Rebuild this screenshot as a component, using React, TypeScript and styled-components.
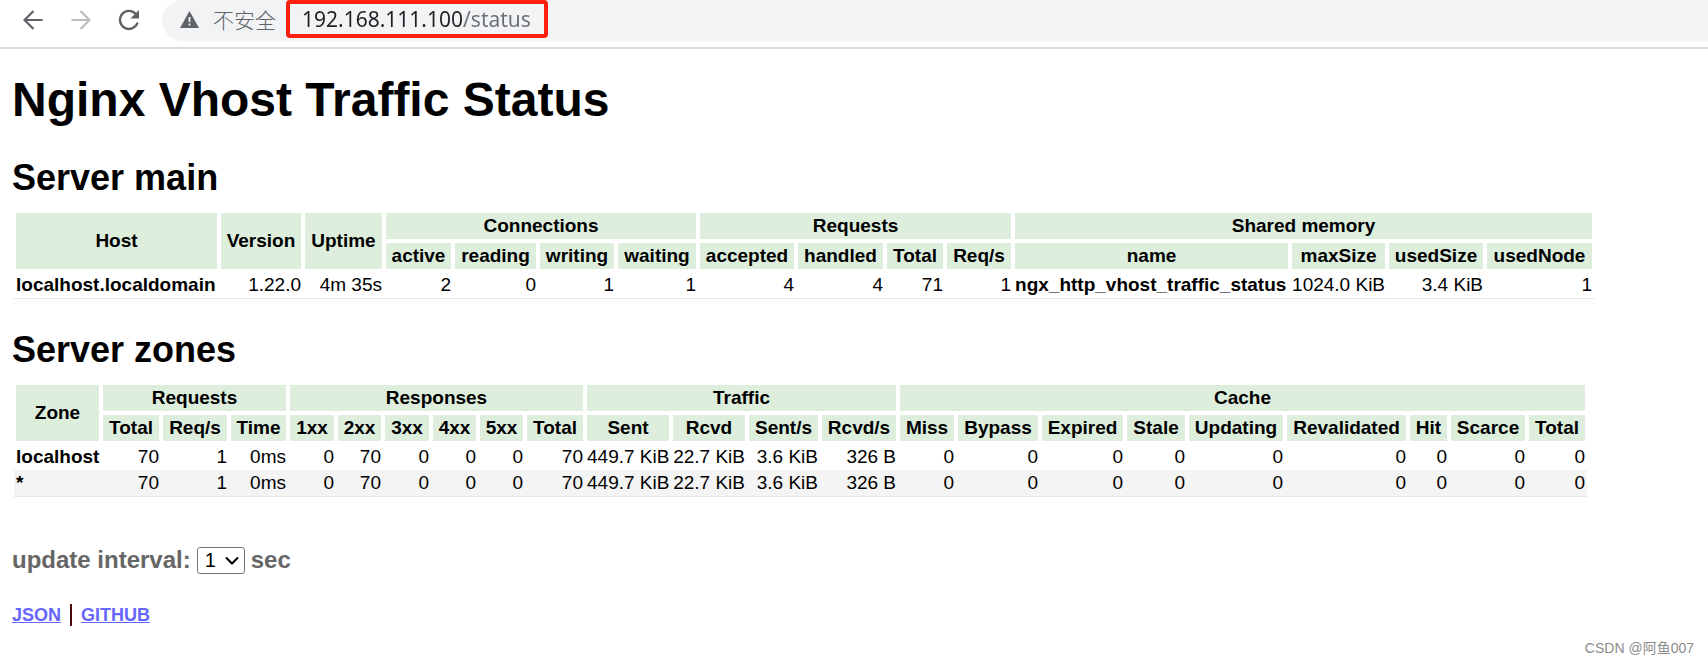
import React, { useState } from "react";
import styled, { createGlobalStyle } from "styled-components";

const GlobalStyle = createGlobalStyle`
  * { box-sizing: border-box; }
  body {
    margin: 0;
    background: #fff;
    color: #000;
    font-family: "Liberation Sans", "Noto Sans CJK SC", sans-serif;
  }
`;

const Page = styled.div`
  min-height: 100vh;
  display: flex;
  flex-direction: column;
`;

const Toolbar = styled.header`
  display: flex;
  align-items: flex-start;
  height: 49px;
  padding-left: 18px;
  border-bottom: 2px solid #dcdcdc;
`;

const NavButton = styled.button`
  width: 30px;
  height: 40px;
  margin-right: 18px;
  padding: 0;
  border: 0;
  background: none;
  display: flex;
  align-items: center;
  justify-content: center;
  color: ${(p) => (p.disabled ? "#babcbe" : "#5f6368")};
`;

const AddressBar = styled.div`
  flex: 1;
  display: flex;
  align-items: center;
  height: 41px;
  padding: 0 0 3px 18px;
  border-radius: 21px 0 0 21px;
  background: #f1f3f4;
  color: #5f6368;
`;

const SecurityLabel = styled.label`
  margin: 0 10px 0 14px;
  font: 300 21px/30px "Noto Sans CJK SC", sans-serif;
`;

const AddressInput = styled.input`
  width: 262px;
  height: 38px;
  padding: 0 0 0 12px;
  border: 4px solid #ff1f10;
  border-radius: 4px;
  outline: 0;
  font: 400 21px/30px "Noto Sans", sans-serif;
  color: transparent;
  background: linear-gradient(90deg, #202124 178px, #6b6f73 178px) border-box text;
`;

const Main = styled.main`
  padding: 0 12px;
`;

const Title = styled.h1`
  margin: 24px 0 0;
  font-size: 48px;
  line-height: 54px;
`;

const SectionTitle = styled.h2`
  margin: 30px 0 0;
  font-size: 36px;
  line-height: 42px;
`;

const StatusTable = styled.table`
  margin: 12px 0 0 2px;
  border-spacing: 0;
  border-bottom: 1px solid #ddeedd;
  font-size: 19px;
  line-height: 26px;
  white-space: nowrap;
  table-layout: fixed;
  width: min-content;

  thead th {
    height: 30px;
    padding: 0;
    border: 2px solid #fff;
    background: #ddeedd;
    background-clip: padding-box;
    text-align: center;
  }
`;

const DataRow = styled.tr`
  &:nth-child(even) { background: #f4f4f4; }
  &:first-child > * { padding-top: 1px; }
`;

const DataCell = styled.td`
  padding: 0 2px;
  text-align: right;
`;

const NameCell = styled.th`
  padding: 0 2px;
  text-align: left;
`;

const IntervalForm = styled.form`
  display: flex;
  align-items: center;
  gap: 6px;
  margin-top: 46px;
  font-size: 24px;
  line-height: 34px;
  font-weight: bold;
  color: #666;
`;

const SelectBox = styled.span`
  display: grid;
  align-items: center;
  height: 27px;

  > * { grid-area: 1 / 1; }
  > svg { justify-self: end; margin-right: 6px; pointer-events: none; }
`;

const Select = styled.select`
  appearance: none;
  width: 48px;
  height: 27px;
  padding: 0 0 0 7px;
  border: 1px solid #767676;
  border-radius: 3px;
  background: #fff;
  color: #000;
  font: 20px/24px "Liberation Sans", sans-serif;
`;

const Links = styled.nav`
  display: flex;
  align-items: center;
  margin-top: 27px;
  font-size: 18px;
  line-height: 22px;
  font-weight: bold;

  a { color: #6666ff; }
  a + a { margin-left: 9px; padding-left: 9px; border-left: 2px solid #4a0808; }
`;

const Credit = styled.footer`
  margin: auto 14px 6px 0;
  text-align: right;
  font-size: 14px;
  line-height: 20px;
  color: #8c8c8c;
`;

type Cell = string | { name: string };
type Group = { label: string; columns?: string[] };

const mainGroups: Group[] = [
  { label: "Host" },
  { label: "Version" },
  { label: "Uptime" },
  { label: "Connections", columns: ["active", "reading", "writing", "waiting"] },
  { label: "Requests", columns: ["accepted", "handled", "Total", "Req/s"] },
  { label: "Shared memory", columns: ["name", "maxSize", "usedSize", "usedNode"] },
];
const mainWidths = [205, 84, 81, 69, 85, 78, 82, 98, 89, 60, 68, 277, 97, 98, 109];
const mainRows: Cell[][] = [
  [
    { name: "localhost.localdomain" }, "1.22.0", "4m 35s", "2", "0", "1", "1", "4", "4", "71", "1",
    { name: "ngx_http_vhost_traffic_status" }, "1024.0 KiB", "3.4 KiB", "1",
  ],
];

const zoneGroups: Group[] = [
  { label: "Zone" },
  { label: "Requests", columns: ["Total", "Req/s", "Time"] },
  { label: "Responses", columns: ["1xx", "2xx", "3xx", "4xx", "5xx", "Total"] },
  { label: "Traffic", columns: ["Sent", "Rcvd", "Sent/s", "Rcvd/s"] },
  {
    label: "Cache",
    columns: ["Miss", "Bypass", "Expired", "Stale", "Updating", "Revalidated", "Hit", "Scarce", "Total"],
  },
];
const zoneWidths = [
  87, 60, 68, 59, 48, 47, 48, 47, 47, 60, 86, 76, 73, 78, 58, 84, 85, 62, 98, 123, 41, 78, 60,
];
const zoneRows: Cell[][] = ["localhost", "*"].map((name) => [
  { name }, "70", "1", "0ms", "0", "70", "0", "0", "0", "70",
  "449.7 KiB", "22.7 KiB", "3.6 KiB", "326 B",
  "0", "0", "0", "0", "0", "0", "0", "0", "0",
]);

const Col = styled.col<{ $width: number }>`
  width: ${(p) => p.$width}px;
`;

function TrafficTable(props: { label: string; groups: Group[]; widths: number[]; rows: Cell[][] }) {
  const { label, groups, widths, rows } = props;
  return (
    <StatusTable aria-label={label}>
      <colgroup>
        {widths.map((w, i) => <Col key={i} $width={w} />)}
      </colgroup>
      <thead>
        <tr>
          {groups.map((g) => (
            <th key={g.label} rowSpan={g.columns ? 1 : 2} colSpan={g.columns ? g.columns.length : 1}>
              {g.label}
            </th>
          ))}
        </tr>
        <tr>
          {groups.flatMap((g) => (g.columns ?? []).map((c) => <th key={g.label + c}>{c}</th>))}
        </tr>
      </thead>
      <tbody>
        {rows.map((row, r) => (
          <DataRow key={r}>
            {row.map((cell, i) =>
              typeof cell === "string"
                ? <DataCell key={i}>{cell}</DataCell>
                : <NameCell key={i}>{cell.name}</NameCell>
            )}
          </DataRow>
        ))}
      </tbody>
    </StatusTable>
  );
}

const Arrow = ({ forward = false }: { forward?: boolean }) => (
  <svg width="20" height="20" viewBox="0 0 20 20" fill="none" stroke="currentColor" strokeWidth="2.2">
    {forward
      ? <path d="M0.5 10H18M9.5 1L18.5 10L9.5 19" />
      : <path d="M19.5 10H2M10.5 1L1.5 10L10.5 19" />}
  </svg>
);

const Reload = () => (
  <svg width="22" height="22" viewBox="0 0 22 22">
    <path d="M17.8 5A9 9 0 1 0 19.6 13.5" fill="none" stroke="currentColor" strokeWidth="2.4" />
    <path d="M21 1V9.5H12.5Z" fill="currentColor" />
  </svg>
);

const Warning = () => (
  <svg width="19" height="17" viewBox="0 0 19 17">
    <path d="M9.5 0L19 17H0Z" fill="currentColor" />
    <path d="M9.5 6V11M9.5 12.6V14.6" stroke="#f1f3f4" strokeWidth="1.8" />
  </svg>
);

export default function App() {
  const [address, setAddress] = useState("192.168.111.100/status");
  const [interval, setInterval] = useState("1");
  return (
    <Page>
      <GlobalStyle />
      <Toolbar>
        <NavButton type="button" aria-label="Back"><Arrow /></NavButton>
        <NavButton type="button" aria-label="Forward" disabled><Arrow forward /></NavButton>
        <NavButton type="button" aria-label="Reload"><Reload /></NavButton>
        <AddressBar>
          <Warning />
          <SecurityLabel htmlFor="address">不安全</SecurityLabel>
          <AddressInput
            id="address"
            type="text"
            spellCheck={false}
            value={address}
            onChange={(e) => setAddress(e.target.value)}
          />
        </AddressBar>
      </Toolbar>
      <Main>
        <Title>Nginx Vhost Traffic Status</Title>
        <SectionTitle>Server main</SectionTitle>
        <TrafficTable label="Server main" groups={mainGroups} widths={mainWidths} rows={mainRows} />
        <SectionTitle>Server zones</SectionTitle>
        <TrafficTable label="Server zones" groups={zoneGroups} widths={zoneWidths} rows={zoneRows} />
        <IntervalForm>
          <label htmlFor="interval">update interval:</label>
          <SelectBox>
            <Select id="interval" value={interval} onChange={(e) => setInterval(e.target.value)}>
              {["1", "2", "3", "4", "5"].map((n) => <option key={n}>{n}</option>)}
            </Select>
            <svg width="14" height="9" viewBox="0 0 14 9" fill="none" stroke="#000" strokeWidth="2">
              <path d="M1 1.5L7 7.5L13 1.5" />
            </svg>
          </SelectBox>
          <span>sec</span>
        </IntervalForm>
        <Links aria-label="Links">
          <a href="#json">JSON</a>
          <a href="#github">GITHUB</a>
        </Links>
      </Main>
      <Credit>CSDN @阿鱼007</Credit>
    </Page>
  );
}
